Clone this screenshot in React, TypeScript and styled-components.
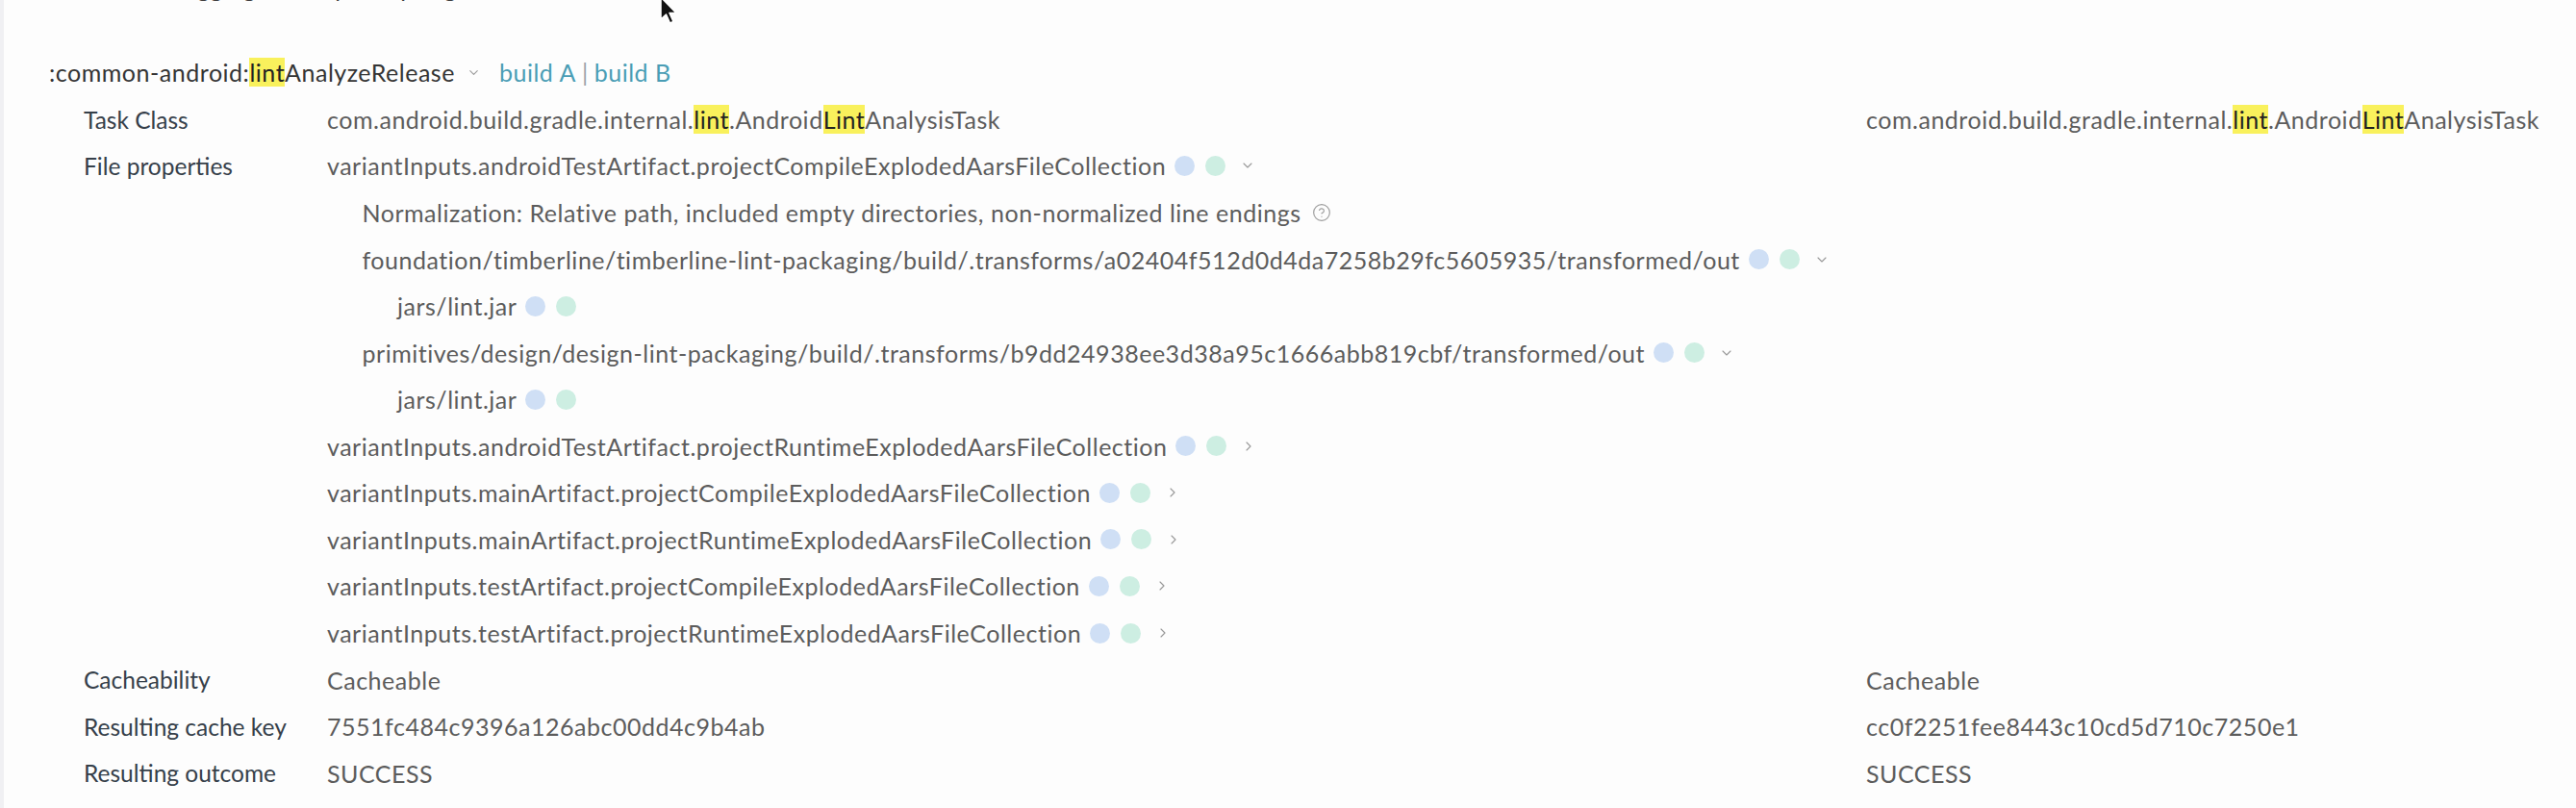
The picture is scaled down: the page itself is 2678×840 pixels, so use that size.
import React from 'react';
import styled, { createGlobalStyle } from 'styled-components';
import { ChevronDown, ChevronRight, CircleHelp } from 'lucide-react';

const ROW = 48.57;
const INDENT = 36.5;

const Global = createGlobalStyle`
  html, body { margin: 0; padding: 0; background: #fdfdfd; }
  body { font-family: Lato, "Open Sans", "Liberation Sans", sans-serif; -webkit-font-smoothing: antialiased; }
`;

const Page = styled.div`
  position: relative;
  box-sizing: border-box;
  height: 840px;
  overflow: hidden;
  border-left: 4px solid #f0f0f3;
  padding-left: 47px;
  font-size: 25px;
  letter-spacing: 0.52px;
  color: #5c5c5c;
`;

const Crumbs = styled.div`
  display: flex;
  align-items: center;
  height: 40px;
  margin-top: -33px;
  color: #3d3d3d;
`;

const CrumbIcon = styled.span`
  display: inline-block;
  width: 14px;
  height: 14px;
  margin-right: 40px;
  background: #9a9a9a;
  transform: rotate(45deg);
`;

const CrumbSep = styled.span`
  margin-right: 26px;
  color: #8a8a8a;
`;

const TaskTitle = styled.div`
  display: flex;
  align-items: center;
  height: ${ROW}px;
  margin-top: 44px;
  color: #343434;
  white-space: nowrap;
`;

const TitleChevron = styled.span`
  display: inline-flex;
  margin: 0 19px 0 12px;
  color: #9a9a9a;
`;

const BuildLink = styled.span`
  color: #4a9db5;
`;

const Sep = styled.span`
  color: #9aa3a8;
  margin: 0 6px;
`;

const Mark = styled.mark`
  background: #f9f15c;
  color: #222;
  padding: 0;
`;

const Table = styled.div`
  display: flex;
  flex-direction: column;
  padding-left: 36px;
`;

const Row = styled.div`
  display: grid;
  grid-template-columns: 253px 1600px 1fr;
  align-items: start;
`;

const Label = styled.div`
  height: ${ROW}px;
  line-height: ${ROW + 1}px;
  font-size: 24.5px;
  letter-spacing: 0;
  color: #36404a;
  white-space: nowrap;
`;

const Cell = styled.div`
  display: flex;
  flex-direction: column;
`;

const Line = styled.div<{ $depth?: number }>`
  display: flex;
  align-items: center;
  height: ${ROW}px;
  padding-left: ${(p) => (p.$depth ?? 0) * INDENT}px;
  white-space: nowrap;
`;

const Dots = styled.span`
  display: inline-flex;
  align-items: center;
  gap: 11px;
  margin-left: 9px;
`;

const Dot = styled.span<{ $tone: 'a' | 'b' }>`
  width: 21px;
  height: 21px;
  border-radius: 50%;
  background: ${(p) => (p.$tone === 'a' ? '#cfdff5' : '#cdeee2')};
`;

const Toggle = styled.span`
  display: inline-flex;
  margin-left: 15px;
  color: #999;
`;

const Help = styled.span`
  display: inline-flex;
  margin-left: 11px;
  color: #9d9d9d;
`;

const Cursor = styled.svg`
  position: absolute;
  left: 681px;
  top: -4px;
`;

function Hl({ text }: { text: string }) {
  const parts = text.split(/(lint|Lint)/);
  return (
    <>
      {parts.map((p, i) => (p === 'lint' || p === 'Lint' ? <Mark key={i}>{p}</Mark> : <span key={i}>{p}</span>))}
    </>
  );
}

type Node = { text: string; depth: number; toggle?: 'open' | 'closed'; help?: boolean; dots?: boolean };

const fileNodes: Node[] = [
  { text: 'variantInputs.androidTestArtifact.projectCompileExplodedAarsFileCollection', depth: 0, dots: true, toggle: 'open' },
  { text: 'Normalization: Relative path, included empty directories, non-normalized line endings', depth: 1, help: true },
  { text: 'foundation/timberline/timberline-lint-packaging/build/.transforms/a02404f512d0d4da7258b29fc5605935/transformed/out', depth: 1, dots: true, toggle: 'open' },
  { text: 'jars/lint.jar', depth: 2, dots: true },
  { text: 'primitives/design/design-lint-packaging/build/.transforms/b9dd24938ee3d38a95c1666abb819cbf/transformed/out', depth: 1, dots: true, toggle: 'open' },
  { text: 'jars/lint.jar', depth: 2, dots: true },
  { text: 'variantInputs.androidTestArtifact.projectRuntimeExplodedAarsFileCollection', depth: 0, dots: true, toggle: 'closed' },
  { text: 'variantInputs.mainArtifact.projectCompileExplodedAarsFileCollection', depth: 0, dots: true, toggle: 'closed' },
  { text: 'variantInputs.mainArtifact.projectRuntimeExplodedAarsFileCollection', depth: 0, dots: true, toggle: 'closed' },
  { text: 'variantInputs.testArtifact.projectCompileExplodedAarsFileCollection', depth: 0, dots: true, toggle: 'closed' },
  { text: 'variantInputs.testArtifact.projectRuntimeExplodedAarsFileCollection', depth: 0, dots: true, toggle: 'closed' },
];

const simpleRows = [
  { label: 'Cacheability', a: 'Cacheable', b: 'Cacheable' },
  { label: 'Resulting cache key', a: '7551fc484c9396a126abc00dd4c9b4ab', b: 'cc0f2251fee8443c10cd5d710c7250e1' },
  { label: 'Resulting outcome', a: 'SUCCESS', b: 'SUCCESS' },
];

export default function App() {
  return (
    <>
      <Global />
      <Page>
        <Crumbs>
          <CrumbIcon />
          <CrumbSep>/</CrumbSep>
          <span>Debugging task inputs spring</span>
        </Crumbs>
        <TaskTitle>
          <span>
            :common-android:<Mark>lint</Mark>AnalyzeRelease
          </span>
          <TitleChevron>
            <ChevronDown size={15} strokeWidth={1.7} />
          </TitleChevron>
          <BuildLink>build A</BuildLink>
          <Sep>|</Sep>
          <BuildLink>build B</BuildLink>
        </TaskTitle>
        <Table>
          <Row>
            <Label>Task Class</Label>
            <Cell>
              <Line>
                <Hl text="com.android.build.gradle.internal.lint.AndroidLintAnalysisTask" />
              </Line>
            </Cell>
            <Cell>
              <Line>
                <Hl text="com.android.build.gradle.internal.lint.AndroidLintAnalysisTask" />
              </Line>
            </Cell>
          </Row>
          <Row>
            <Label>File properties</Label>
            <Cell>
              {fileNodes.map((n, i) => (
                <Line key={i} $depth={n.depth}>
                  <span>{n.text}</span>
                  {n.help && (
                    <Help>
                      <CircleHelp size={20} strokeWidth={1.4} />
                    </Help>
                  )}
                  {n.dots && (
                    <Dots>
                      <Dot $tone="a" />
                      <Dot $tone="b" />
                    </Dots>
                  )}
                  {n.toggle && (
                    <Toggle>
                      {n.toggle === 'open' ? (
                        <ChevronDown size={16} strokeWidth={1.7} />
                      ) : (
                        <ChevronRight size={16} strokeWidth={1.7} />
                      )}
                    </Toggle>
                  )}
                </Line>
              ))}
            </Cell>
            <Cell />
          </Row>
          {simpleRows.map((r) => (
            <Row key={r.label}>
              <Label>{r.label}</Label>
              <Cell>
                <Line>{r.a}</Line>
              </Cell>
              <Cell>
                <Line>{r.b}</Line>
              </Cell>
            </Row>
          ))}
        </Table>
        <Cursor width="22" height="32" viewBox="0 0 22 32">
          <path d="M2 1 L2 24 L7.5 19 L11.5 28 L15 26.5 L11 17.5 L18 17.5 Z" fill="#111" stroke="#fff" strokeWidth="1.5" strokeLinejoin="round" />
        </Cursor>
      </Page>
    </>
  );
}
